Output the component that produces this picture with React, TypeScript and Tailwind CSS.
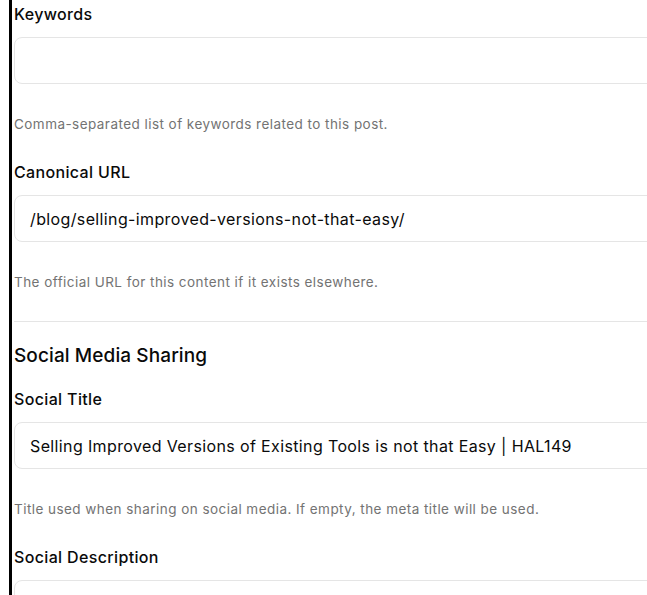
import React from 'react';

type FieldProps = {
	label: string;
	value?: string;
	help?: string;
};

function Field({label, value, help}: FieldProps) {
	return (
		<div className="flex flex-col">
			<label className="text-[16px] leading-[24px] font-medium tracking-[0.35px] text-[#0a0a0a]">{label}</label>
			<div className="mt-[11px] h-[47px] w-[720px] rounded-[8px] border border-[#e5e5e5] bg-white flex items-center px-[15px] text-[16px] tracking-[0.37px] text-[#0a0a0a]">
				{value}
			</div>
			{help && <p className="mt-[30px] text-[13.5px] leading-[20px] tracking-[0.45px] text-[#737373]">{help}</p>}
		</div>
	);
}

export default function App() {
	return (
		<div className="w-[647px] h-[595px] overflow-hidden bg-white font-['Inter',sans-serif]">
			<div className="ml-[9px] border-l-[3px] border-black pl-[2px] pt-[2px] min-h-[595px]">
				<div className="space-y-[26px]">
					<Field label="Keywords" help="Comma-separated list of keywords related to this post."/>
					<Field label="Canonical URL" value="/blog/selling-improved-versions-not-that-easy/"
						   help="The official URL for this content if it exists elsewhere."/>
				</div>
				<div className="mt-[29px] h-px w-[720px] bg-[#e5e5e5]"/>
				<h2 className="mt-[20px] text-[19px] leading-[28px] font-medium tracking-[0.1px] text-[#0a0a0a]">Social Media Sharing</h2>
				<div className="mt-[17px] space-y-[26px]">
					<Field label="Social Title" value="Selling Improved Versions of Existing Tools is not that Easy | HAL149"
						   help="Title used when sharing on social media. If empty, the meta title will be used."/>
					<Field label="Social Description"/>
				</div>
			</div>
		</div>
	);
}
